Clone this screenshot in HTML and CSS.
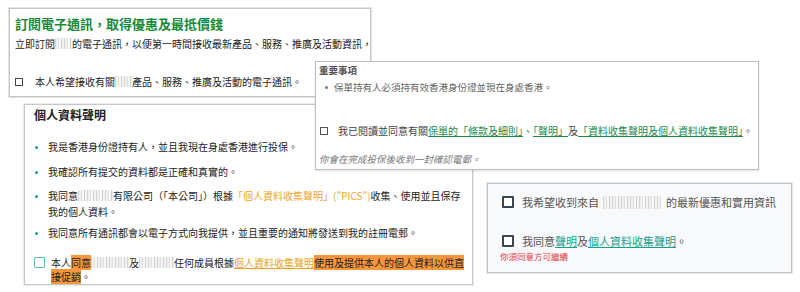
FILE: index.html
```html
<!DOCTYPE html>
<html lang="zh-Hant">
<head>
<meta charset="utf-8">
<link rel="stylesheet" href="styles.css">
</head>
<body>
<div class="canvas">

  <section class="card card-sub">
    <h2 class="sub-title">訂閱電子通訊，取得優惠及最抵價錢</h2>
    <p class="sub-text">立即訂閱<span class="blur b17"></span>的電子通訊，以便第一時間接收最新產品、服務、推廣及活動資訊，</p>
    <label class="sub-check"><span class="box box-sm"></span><span class="txt">本人希望接收有關<span class="blur b17"></span>產品、服務、推廣及活動的電子通訊。</span></label>
  </section>

  <section class="card card-pdpo">
    <h2 class="pdpo-title">個人資料聲明</h2>
    <ul class="pdpo-list">
      <li class="i1">我是香港身份證持有人，並且我現在身處香港進行投保。</li>
      <li class="i2">我確認所有提交的資料都是正確和真實的。</li>
      <li class="i3">我同意<span class="blur b35"></span>有限公司（「本公司」）根據<span class="gold">「個人資料收集聲明」("PICS")</span>收集、使用並且保存我的個人資料。</li>
      <li class="i4">我同意所有通訊都會以電子方式向我提供，並且重要的通知將發送到我的註冊電郵。</li>
    </ul>
    <div class="pdpo-check">
      <span class="box box-teal"></span>
      <p class="txt">本人<mark>同意</mark><span class="blur b38"></span>及<span class="blur b35"></span>任何成員根據<a class="gold-link">個人資料收集聲明</a><mark>使用及提供本人的個人資料以供直接促銷</mark>。</p>
    </div>
  </section>

  <section class="card card-notice">
    <h3 class="notice-title">重要事項</h3>
    <ul class="notice-list">
      <li>保單持有人必須持有效香港身份證並現在身處香港。</li>
    </ul>
    <label class="notice-check"><span class="box box-sm"></span><span class="txt">我已閱讀並同意有關<a class="green-link">保單的「條款及細則」</a>、<a class="green-link">「聲明」</a>及<a class="green-link">「資料收集聲明及個人資料收集聲明」</a>。</span></label>
    <p class="notice-note">你會在完成投保後收到一封確認電郵。</p>
  </section>

  <section class="card card-consent">
    <label class="consent-row r1"><span class="box box-lg"></span><span class="txt">我希望收到來自<span class="blur b60"></span>的最新優惠和實用資訊</span></label>
    <label class="consent-row r2"><span class="box box-lg"></span><span class="txt">我同意<a class="teal-link">聲明</a>及<a class="teal-link">個人資料收集聲明</a>。</span></label>
    <p class="consent-error">你須同意方可繼續</p>
  </section>

</div>
</body>
</html>
```

FILE: styles.css
```css
* { box-sizing: border-box; }
html, body { margin: 0; padding: 0; background: #fff; }
body {
  font-family: "Noto Sans CJK TC", "Noto Sans", sans-serif;
  color: #333;
}
.canvas { position: relative; width: 800px; height: 292px; overflow: hidden; }

h2, h3, p, ul { margin: 0; padding: 0; }
ul { list-style: none; }
a { text-decoration: underline; text-underline-offset: 1px; }
mark { background: #f8963c; color: #222; padding: 0; }

.card { position: absolute; background: #fff; }

/* blurred placeholders */
.blur {
  display: inline-block;
  height: 11px;
  vertical-align: -1px;
  background: repeating-linear-gradient(90deg, #d6d6d6 0 1px, #efefef 1px 3px, #e0e0e0 3px 4px, #f8f8f8 4px 6px, #cfcfcf 6px 7px, #f2f2f2 7px 9px);
}
.b17 { width: 17px; }
.b35 { width: 35px; }
.b38 { width: 38px; }
.b60 { width: 60px; height: 13px; margin: 0 3px 0 4px; vertical-align: -2px; }

/* checkboxes */
.box { display: inline-block; flex: none; background: #fff; }
.box-sm { width: 8px; height: 8px; border: 1px solid #444; }
.box-teal { width: 11px; height: 11px; border: 1px solid #5cc3a4; border-radius: 1px; }
.box-lg { width: 12px; height: 12px; border: 2px solid #3c4651; border-radius: 1px; }

/* card 1: subscription */
.card-sub {
  left: 9px; top: 8px; width: 362px; height: 89px;
  border: 1px solid #c4c4c4;
  box-shadow: 0 0 0 1px #e4e4e4;
  padding: 7px 0 0 5px;
  overflow: hidden;
}
.sub-title { font-size: 13px; line-height: 16px; font-weight: 700; color: #16893a; }
.sub-text { margin-top: 5px; font-size: 10px; line-height: 14px; color: #222; white-space: nowrap; }
.sub-check {
  display: flex; align-items: center; gap: 12px;
  margin-top: 24px; font-size: 10px; line-height: 14px; color: #222; white-space: nowrap;
}

/* card 3: personal data */
.card-pdpo {
  left: 24px; top: 104px; width: 449px; height: 181px;
  border: 1px solid #c8c8c8;
  box-shadow: 0 0 0 1px #ececec;
  padding: 2px 0 0 9px;
}
.pdpo-title { font-size: 12px; line-height: 16px; font-weight: 700; color: #222; }
.pdpo-list { margin-top: 16px; font-size: 10px; line-height: 16px; color: #222; }
.pdpo-list li { position: relative; padding-left: 14px; padding-right: 8px; }
.pdpo-list li::before {
  content: ""; position: absolute; left: 1px; top: 7px;
  width: 3px; height: 3px; border-radius: 50%; background: #17a06c;
}
.pdpo-list .i2 { margin-top: 9px; }
.pdpo-list .i3 { margin-top: 8px; }
.pdpo-list .i4 { margin-top: 5px; }
.gold { color: #f0a52a; }
.gold-link { color: #e9a324; }
.pdpo-check { display: flex; align-items: flex-start; gap: 6px; margin-top: 15px; padding-right: 6px; }
.pdpo-check .box { margin-top: 1px; }
.pdpo-check .txt { font-size: 10px; line-height: 14px; color: #222; }

/* card 2: important notice */
.card-notice {
  left: 315px; top: 61px; width: 444px; height: 109px;
  border: 1px solid #bdbdbd;
  box-shadow: 0 1px 2px rgba(0,0,0,0.12);
  padding: 1px 0 0 3px;
}
.notice-title { font-size: 9.5px; line-height: 14px; font-weight: 700; color: #555; }
.notice-list { margin-top: 3px; font-size: 9.5px; line-height: 14px; color: #666; }
.notice-list li { position: relative; padding-left: 15px; }
.notice-list li::before {
  content: ""; position: absolute; left: 6px; top: 6px;
  width: 3px; height: 3px; border-radius: 50%; background: #777;
}
.notice-check {
  display: flex; align-items: center; gap: 10px;
  margin-top: 30px; padding-left: 1px;
  font-size: 10px; line-height: 14px; color: #444; white-space: nowrap;
}
.notice-check .box { border-color: #555; }
.green-link { color: #1d8a4e; }
.notice-note { margin-top: 14px; font-size: 9.5px; line-height: 14px; color: #777; font-style: italic; }

/* card 4: consent */
.card-consent {
  left: 487px; top: 183px; width: 305px; height: 90px;
  background: #f8f9fb;
  border: 1px solid #c2c2c2;
  box-shadow: 0 0 0 1px #e8e8e8;
  padding: 11px 0 0 14px;
}
.consent-row {
  display: flex; align-items: center; gap: 8px;
  font-size: 11px; line-height: 14px; color: #555; white-space: nowrap;
}
.consent-row.r2 { margin-top: 25px; }
.teal-link { color: #1c9c8c; }
.consent-error { margin-top: 3px; margin-left: -2px; font-size: 8.5px; line-height: 11px; color: #e0393e; }
```
